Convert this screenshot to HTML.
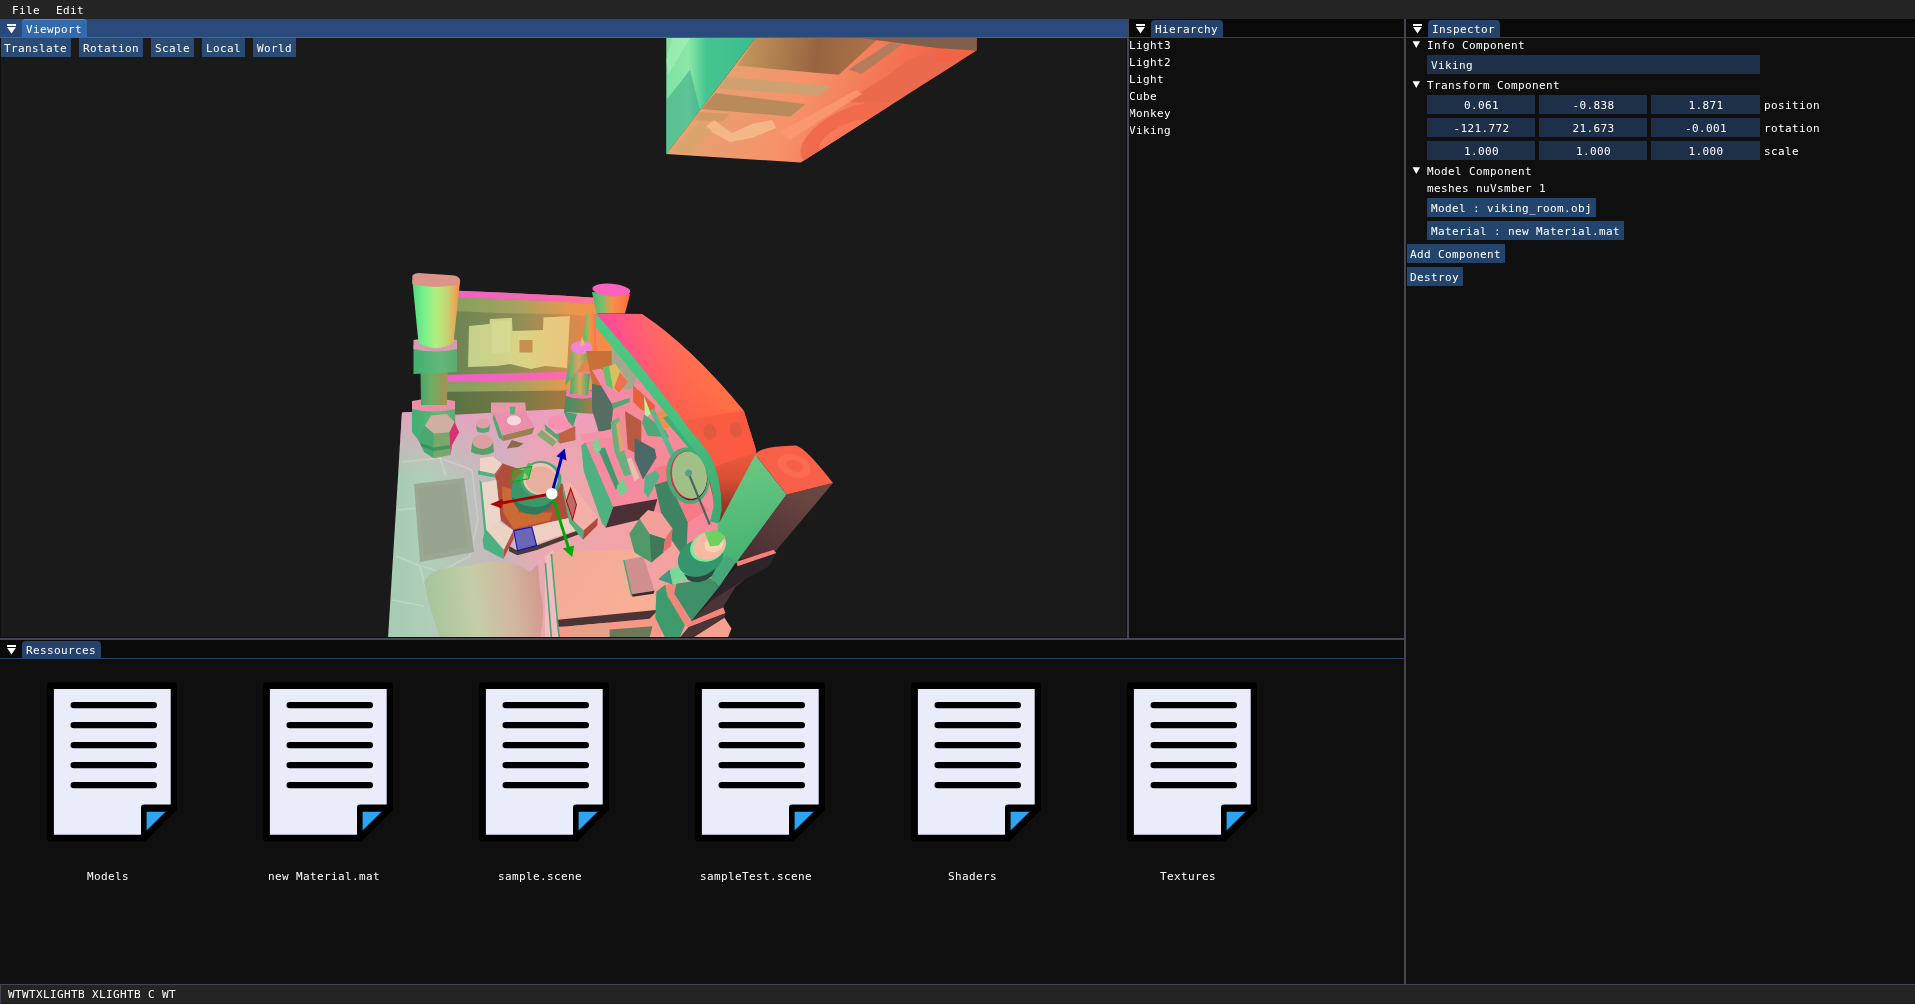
<!DOCTYPE html>
<html lang="en">
<head>
<meta charset="utf-8">
<title>Editor</title>
<style>
html,body{margin:0;padding:0;}
body{width:1915px;height:1004px;overflow:hidden;background:#0f0f0f;position:relative;
 font:11px/13px "DejaVu Sans Mono","Liberation Mono",monospace;letter-spacing:0.3774px;color:#fff;}
.a{position:absolute;}
.t{position:absolute;white-space:pre;height:13px;will-change:transform;}
.btn{position:absolute;height:19px;background:#23456d;}
.btn .t{left:4px;top:4px;}
.vbtn{background:#2a4c74;}
.frm{position:absolute;height:19px;background:#1d2f49;}
.frm .t{top:4px;}
.num{width:108px;}
.num .t{left:1px;right:0;text-align:center;}
.tri{position:absolute;width:0;height:0;border-left:3.7px solid transparent;border-right:3.7px solid transparent;border-top:6.8px solid #fff;}
.sep{position:absolute;background:#45454f;}
</style>
</head>
<body>

<!-- main menu bar -->
<div class="a" id="menubar" style="left:0;top:0;width:1915px;height:19px;background:#242424;">
  <span class="t" style="left:12px;top:4px;">File</span>
  <span class="t" style="left:56px;top:4px;">Edit</span>
</div>

<!-- ================= Viewport window ================= -->
<div class="a" id="viewport" style="left:0;top:19px;width:1127px;height:619px;background:#0f0f0f;overflow:hidden;">
  <div class="a" style="left:1px;top:19px;width:1125px;height:599px;background:#1a1a1a;"></div>
  <div class="a" style="left:0;top:0;width:1127px;height:18px;background:#294a7a;"></div>
  <div class="a" style="left:0;top:18px;width:1127px;height:1px;background:#3369ad;"></div>
  <div class="a" style="left:22px;top:0;width:65px;height:18px;background:#3369ad;border-radius:4px 4px 0 0;box-sizing:border-box;border-top:1px solid #4190f2;"></div>
  <svg class="a" style="left:0;top:0;" width="22" height="19"><rect x="7" y="5" width="9" height="2" fill="#fff"/><path d="M7.100 8.100h8.800l-4.400 6.500z" fill="#fff"/></svg>
  <span class="t" style="left:26px;top:4px;">Viewport</span>
  <svg class="a" style="left:0;top:19px;" width="1127" height="619" viewBox="0 38 1127 619" shape-rendering="geometricPrecision">
<defs>
  <clipPath id="vpclip"><rect x="1" y="38" width="1125" height="599"/></clipPath>
  <!-- top box -->
  <linearGradient id="tbG" x1="666" y1="0" x2="756" y2="0" gradientUnits="userSpaceOnUse">
    <stop offset="0" stop-color="#7fe2a2"/><stop offset="0.25" stop-color="#8ae8a8"/><stop offset="0.45" stop-color="#45c590"/><stop offset="1" stop-color="#3bbd8c"/>
  </linearGradient>
  <linearGradient id="tbO" x1="720" y1="60" x2="900" y2="140" gradientUnits="userSpaceOnUse">
    <stop offset="0" stop-color="#e6a272"/><stop offset="0.45" stop-color="#f6926a"/><stop offset="1" stop-color="#f26446"/>
  </linearGradient>
  <linearGradient id="tbB" x1="740" y1="40" x2="880" y2="60" gradientUnits="userSpaceOnUse">
    <stop offset="0" stop-color="#c8985e"/><stop offset="0.55" stop-color="#96653f"/><stop offset="1" stop-color="#b0744a"/>
  </linearGradient>
  <clipPath id="tbClip"><path d="M755.6 38 H976.5 V50.5 L800.7 162.5 L666.3 154.1 Z"/></clipPath>
  <!-- floor -->
  <linearGradient id="flG" x1="390" y1="0" x2="720" y2="0" gradientUnits="userSpaceOnUse">
    <stop offset="0" stop-color="#a6ccb2"/><stop offset="0.12" stop-color="#b0ceb8"/><stop offset="0.22" stop-color="#bcc2bb"/><stop offset="0.34" stop-color="#c8b6be"/><stop offset="0.46" stop-color="#eaa9b2"/><stop offset="1" stop-color="#f99e98"/>
  </linearGradient>
  <linearGradient id="flP" x1="0" y1="408" x2="0" y2="475" gradientUnits="userSpaceOnUse">
    <stop offset="0" stop-color="#ee9cc0" stop-opacity="0.9"/><stop offset="1" stop-color="#ee9cc0" stop-opacity="0"/>
  </linearGradient>
  <!-- wall -->
  <linearGradient id="wlG" x1="456" y1="0" x2="598" y2="0" gradientUnits="userSpaceOnUse">
    <stop offset="0" stop-color="#6d8552"/><stop offset="0.45" stop-color="#8f8f56"/><stop offset="0.8" stop-color="#d38a4e"/><stop offset="1" stop-color="#ec8646"/>
  </linearGradient>
  <linearGradient id="wlL" x1="456" y1="0" x2="598" y2="0" gradientUnits="userSpaceOnUse">
    <stop offset="0" stop-color="#86a05e"/><stop offset="0.45" stop-color="#a8a260"/><stop offset="0.8" stop-color="#e8984e"/><stop offset="1" stop-color="#f88e48"/>
  </linearGradient>
  <linearGradient id="wlP" x1="456" y1="0" x2="598" y2="0" gradientUnits="userSpaceOnUse">
    <stop offset="0" stop-color="#ee62c6"/><stop offset="0.6" stop-color="#fa66b4"/><stop offset="1" stop-color="#ff7a92"/>
  </linearGradient>
  <linearGradient id="mapG" x1="466" y1="0" x2="570" y2="0" gradientUnits="userSpaceOnUse">
    <stop offset="0" stop-color="#c3d08e"/><stop offset="0.5" stop-color="#d8d486"/><stop offset="1" stop-color="#ecc47a"/>
  </linearGradient>
  <!-- pillar -->
  <linearGradient id="p1G" x1="412" y1="0" x2="460" y2="0" gradientUnits="userSpaceOnUse">
    <stop offset="0" stop-color="#50d880"/><stop offset="0.25" stop-color="#78f08c"/><stop offset="0.5" stop-color="#b0f080"/><stop offset="0.75" stop-color="#c8d070"/><stop offset="0.93" stop-color="#f0a050"/><stop offset="1" stop-color="#e08a50"/>
  </linearGradient>
  <linearGradient id="p1D" x1="418" y1="0" x2="450" y2="0" gradientUnits="userSpaceOnUse">
    <stop offset="0" stop-color="#3fa468"/><stop offset="0.4" stop-color="#6cae62"/><stop offset="1" stop-color="#b08a50"/>
  </linearGradient>
  <linearGradient id="p1B" x1="412" y1="0" x2="458" y2="0" gradientUnits="userSpaceOnUse">
    <stop offset="0" stop-color="#3fae72"/><stop offset="0.6" stop-color="#62b878"/><stop offset="1" stop-color="#5ea870"/>
  </linearGradient>
  <!-- roof -->
  <linearGradient id="rfG" x1="610" y1="320" x2="740" y2="440" gradientUnits="userSpaceOnUse">
    <stop offset="0" stop-color="#ff4a9a"/><stop offset="0.3" stop-color="#ff5878"/><stop offset="0.6" stop-color="#ff6050"/><stop offset="1" stop-color="#ff5a3e"/>
  </linearGradient>
  <linearGradient id="rfO" x1="640" y1="365" x2="674" y2="337" gradientUnits="userSpaceOnUse"><stop offset="0" stop-color="#ff7c46" stop-opacity="0"/><stop offset="1" stop-color="#ff7c46" stop-opacity="0.6"/></linearGradient>
  <linearGradient id="arcG" x1="596" y1="314" x2="720" y2="520" gradientUnits="userSpaceOnUse"><stop offset="0" stop-color="#4ccc80"/><stop offset="0.6" stop-color="#46c07e"/><stop offset="1" stop-color="#3ea874"/></linearGradient>
  <linearGradient id="rfE" x1="690" y1="0" x2="760" y2="0" gradientUnits="userSpaceOnUse">
    <stop offset="0" stop-color="#f45e46"/><stop offset="1" stop-color="#ff583e"/>
  </linearGradient>
  <linearGradient id="rfW" x1="0" y1="450" x2="0" y2="540" gradientUnits="userSpaceOnUse">
    <stop offset="0" stop-color="#f05a3c"/><stop offset="0.33" stop-color="#d84e34"/><stop offset="0.67" stop-color="#8c3428"/><stop offset="0.9" stop-color="#5a2c28"/>
  </linearGradient>
  <!-- log -->
  <linearGradient id="lgG" x1="740" y1="470" x2="760" y2="560" gradientUnits="userSpaceOnUse">
    <stop offset="0" stop-color="#66c680"/><stop offset="1" stop-color="#46b272"/>
  </linearGradient>
  <linearGradient id="lgD" x1="800" y1="490" x2="760" y2="560" gradientUnits="userSpaceOnUse">
    <stop offset="0" stop-color="#6a4640"/><stop offset="1" stop-color="#4a3034"/>
  </linearGradient>
  <linearGradient id="bedG" x1="550" y1="560" x2="660" y2="640" gradientUnits="userSpaceOnUse">
    <stop offset="0" stop-color="#f0ac98"/><stop offset="1" stop-color="#fbb094"/>
  </linearGradient>
  <linearGradient id="furG" x1="425" y1="600" x2="545" y2="585" gradientUnits="userSpaceOnUse">
    <stop offset="0" stop-color="#a4c49c"/><stop offset="0.4" stop-color="#c4cea6"/><stop offset="0.7" stop-color="#d2b8a0"/><stop offset="1" stop-color="#d4948a"/>
  </linearGradient>
  <linearGradient id="tbase" x1="564" y1="0" x2="596" y2="0" gradientUnits="userSpaceOnUse"><stop offset="0" stop-color="#3f9060"/><stop offset="0.5" stop-color="#6a8a58"/><stop offset="1" stop-color="#c87040"/></linearGradient>
  <linearGradient id="p2G" x1="0" y1="0" x2="1" y2="0"><stop offset="0" stop-color="#4cb870"/><stop offset="0.28" stop-color="#7abf68"/><stop offset="0.5" stop-color="#f49448"/><stop offset="1" stop-color="#ff6a40"/></linearGradient>
  <linearGradient id="coneG" x1="0" y1="0" x2="1" y2="0">
    <stop offset="0" stop-color="#3db070"/><stop offset="0.5" stop-color="#d8a860"/><stop offset="1" stop-color="#3da868"/>
  </linearGradient>
</defs>
<g clip-path="url(#vpclip)">

<!-- ===== top box ===== -->
<path d="M666.3 38 H755.6 L666.3 154.1 Z" fill="url(#tbG)"/>
<path d="M666.3 100 L690 70 L700 110 L666.3 154.1 Z" fill="#3aa586" opacity="0.55"/>
<path d="M672 38 L690 38 L668 75 L666.3 60 Z" fill="#a8f0b4" opacity="0.6"/>
<g clip-path="url(#tbClip)">
  <rect x="660" y="30" width="330" height="140" fill="url(#tbO)"/>
  <path d="M756.6 37 H880 L838.7 74.7 L737 65.7 Z" fill="url(#tbB)"/>
  <path d="M854 37 H977 V50.7 L936.8 48 L890 42 Z" fill="#80604c"/>
  <path d="M726.5 77 L830.7 86 L819.3 96 L719 88.3 Z" fill="#cfa070"/>
  <path d="M715.2 93 L805.4 104.3 L790.4 116.5 L702 109 Z" fill="#b98a5a"/>
  <path d="M700 112 L730 114 L722 122 L694 120 Z" fill="#d49a66"/>
  <path d="M848.7 69.4 L890 42.7 L902 44.7 L861.4 74 Z" fill="#b47c5c"/>
  <ellipse cx="848" cy="134" rx="52" ry="24" transform="rotate(-27 848 134)" fill="#f26a4c"/>
  <ellipse cx="846" cy="137" rx="30" ry="12" transform="rotate(-27 846 137)" fill="#f87858"/>
  <path d="M845.4 101.4 L884.7 77.4 L908.7 60 L935.4 48.7 L936.1 62.7 L960.8 60.7 L943.4 72 L890 102.7 L863.4 102.7 Z" fill="#ea6a4e"/>
  <path d="M704 128 L714 120 L732 133 L752 124 L772 120 L776 128 L752 138 L730 142 Z" fill="#f4bc8c" opacity="0.85"/>
  <path d="M672 150 L700 122 L712 130 L690 155 Z" fill="#d8a46c" opacity="0.8"/>
  <path d="M780 132 L856 90 L862 94 L790 140 Z" fill="#fa9a74" opacity="0.8"/>
</g>

<!-- ===== floor ===== -->
<path d="M402 412.500 L460 409 L720 408 L730 560 L700 600 L684 638 L388 638 Z" fill="url(#flG)"/>
<path d="M402 412.500 L460 409 L720 408 L740 500 L396 500 Z" fill="url(#flP)"/>

<g fill="none" stroke="#ffffff" stroke-opacity="0.22" stroke-width="1.600">
<path d="M402 462 L440 458 L472 470"/><path d="M398 510 L416 508"/><path d="M396 556 L420 566 L426 590"/><path d="M440 458 L446 476"/><path d="M472 470 L478 520 L470 556 L440 572 L422 566"/><path d="M392 600 L424 606"/>
</g>
<!-- ===== back wall ===== -->
<path d="M440 290.500 L452 290.500 L500 292.500 L560 295.500 L598 298 L598 407 L440 415.500 Z" fill="url(#wlG)"/>
<path d="M440 391 L598 389 L598 407 L440 415.500 Z" fill="#1a2a10" opacity="0.2"/>
<path d="M452 296 L500 299 L560 301.500 L598 304.500 L598 317 L560 314 L500 313 L452 311 Z" fill="url(#wlL)"/>
<path d="M452 290.500 L500 292.500 L560 295.500 L598 298 L598 304.500 L560 301.500 L500 299 L452 296.500 Z" fill="url(#wlP)"/>
<path d="M440 380 L598 376 L598 390 L440 392 Z" fill="url(#wlL)"/>
<path d="M440 375 L598 371 L598 379 L440 382 Z" fill="url(#wlP)"/>
<!-- map -->
<path d="M469 326 L489.5 324 L490 319 L512 318 L512.5 331 L543 330 L543.5 317.5 L570 316 L567 368 L545 366 L531 369 L510 364 L497 366 L468 367 Z" fill="url(#mapG)"/>
<rect x="519.5" y="340" width="13" height="12.5" fill="#c8904c"/>
<path d="M492 321 L510 320.5 L510 352 L492 353 Z" fill="#d6dc96" opacity="0.7"/>

<!-- ===== pillar 2 + post ===== -->
<path d="M586 314 L596.500 314 L598 352 L582 352 Z" fill="url(#p2G)"/>
<path d="M591.900 292 L630.100 294 L625 313.500 L596.500 313.500 Z" fill="url(#p2G)"/>
<ellipse cx="611.300" cy="290" rx="19" ry="6.200" transform="rotate(5 611.300 290)" fill="#fa62be"/>

<!-- ===== left pillar ===== -->
<path d="M412 408 L455 406 L455.5 430 L440 447 L424 447 L412 432 Z" fill="url(#p1B)"/>
<path d="M412 401 Q433 396 455 401 L455 409 Q433 414 412 409 Z" fill="#e890a8"/>
<path d="M420.5 372 L447.5 372 L447 405 L421 405 Z" fill="url(#p1D)"/>
<path d="M413.5 345 L457 345 L457 372 L413.5 374 Z" fill="url(#p1B)"/>
<path d="M413.5 340 Q435 335 457 340 L457 349 Q435 354 413.5 349 Z" fill="#d89ab0"/>
<path d="M412.3 280 L460 282 L453.500 343 Q436 353 418.500 343 Z" fill="url(#p1G)"/>
<path d="M412.3 276 Q414 272.500 422 273.200 L452 275.300 Q460 276 460.300 281 L459.500 284 Q436 290 412.300 284 Z" fill="#dc9488"/>
<!-- hex barrel at pillar base -->
<path d="M417.7 438.7 L424.8 425.8 L433.8 433.6 L433.8 458.2 L424 452 Z" fill="#48a870"/>
<path d="M433.8 433.6 L449.4 432.3 L450.7 455 L433.8 458.2 Z" fill="#7aa868"/>
<path d="M449.4 432.3 L454.5 421.9 L459.1 432.3 L452 445.2 L450.7 455 Z" fill="#d83070"/>
<path d="M424.8 425.8 L431.2 415.4 L446.8 414.1 L454.5 421.9 L449.4 432.3 L433.8 433.6 Z" fill="#cfb0a0"/>
<path d="M420 443 L433.800 447.500 L450.300 445 L450.500 448.500 L433.800 451 L421.500 446.500 Z" fill="#3a8a60" opacity="0.8"/>

<!-- ===== torch 1 ===== -->
<path d="M566 392 L594 394 L596 414 L564 412 Z" fill="url(#tbase)"/>
<path d="M566 391 Q580 386 594 392 L594 397 Q580 401 566 396 Z" fill="#f07aa8"/>
<path d="M571 372 L590 374 L588 395 L570 394 Z" fill="url(#coneG)"/>
<path d="M571 350 L592.500 352 L565 386 Z" fill="url(#coneG)"/>
<ellipse cx="581.500" cy="347.500" rx="11" ry="6.500" fill="#f084d6"/>
<path d="M580 346 L582 336 L585 345 Z" fill="#ffb070"/>

<!-- ===== interior under the roof ===== -->
<path d="M596 318 L612 336 L690 440 L722 520 L700 560 L598 470 Z" fill="#f68a9a"/>
<path d="M596.500 322 L616 346 L616 353 L596.500 353 Z" fill="#f88a48"/>
<path d="M586 351 L616 351 L616 392 L594 392 Z" fill="#c87038"/>
<path d="M611.7 346 L626 349.7 L637 375 L633.2 389.2 L615.3 389.2 L611.7 366 Z" fill="#a6a88e"/>
<path d="M592 383.8 L615.3 389.2 L611 429 L599 432.500 L592 410 Z" fill="#566e62"/>
<path d="M592 370.3 L601 368.6 L629.7 398 L611.7 403.5 Z" fill="#f48aa8"/>
<path d="M611.7 403.5 L629.7 398 L629.7 402 L613 409 Z" fill="#50a878"/>
<path d="M602.8 367.7 L615.3 364 L628 382 L619 392.8 L606.3 385.6 Z" fill="#d8c060"/>
<path d="M602.8 367.7 L609 366 L613 389 L606.3 385.6 Z" fill="#60c070"/>
<path d="M620 372 L628 382 L619 392.8 L614 388 Z" fill="#f07050"/>
<path d="M633.2 385.6 L654.8 405.3 L654.8 416 L640.4 409 L633.2 401.7 Z" fill="#e8603c"/>
<path d="M644 396 L651 414 L645 418 Z" fill="#b8f0a0"/>
<path d="M644 414.3 L665.5 430.4 L669 437.6 L647.6 435.8 L642.2 423.2 Z" fill="#50a878"/>
<ellipse cx="663.5" cy="419.5" rx="8" ry="9.5" transform="rotate(-30 663.5 419.5)" fill="#f09050"/>
<path d="M649.7 410.2 L654 408.5 L675 454 L670.500 456.500 Z" fill="#58b890"/>
<path d="M625 411 L641.3 421 L641.3 455.9 L627.7 449.1 Z" fill="#b85a42"/>
<path d="M634.5 438.1 L654.8 449.1 L656.5 457.6 L643 479.6 L634.5 459.3 Z" fill="#4a6866"/>
<!-- bench -->
<path d="M581.2 445.7 L585.4 442.3 L613.3 506.7 L605.7 527.8 L601.5 521.9 L583.7 471.1 Z" fill="#4fb080"/>
<path d="M585.4 442.3 L610.8 437.3 L657.4 499.1 L613.3 506.7 Z" fill="#f68a9e"/>
<path d="M613.3 506.7 L657.4 499.1 L652.3 516.8 L605.7 527.8 Z" fill="#4a3034"/>
<path d="M598.1 449.1 L604.9 447.4 L619.3 484.7 L615.9 489.7 Z" fill="#3f9a70"/>
<path d="M580 434 L611 430 L612 437 L582 441.500 Z" fill="#f890a8"/>
<path d="M610.8 422 L619.3 416.9 L624.3 450.8 L631.1 474.5 L624.3 476.2 L614.2 450.8 Z" fill="#68b080"/>
<path d="M616 424 L620 421 L624.300 450 L620 452 Z" fill="#e8a070"/>
<path d="M626.9 459.3 L631.1 457.6 L639.6 477.9 L634.5 481.3 Z" fill="#e8c0b0"/>
<path d="M617 486 L623 478 L628 490 L620 496 Z" fill="#70d090"/>
<path d="M592 444 L598 436 L601 450 L595 454 Z" fill="#80d098"/>
<!-- window side -->
<path d="M654 468.6 L669.2 464.3 L681.9 501.6 L702.2 503.3 L709 510 L688.7 521.9 L668.4 481.3 L654.8 484.7 Z" fill="#f87a84"/>
<path d="M654.8 484.7 L668.4 480.4 L687.8 521.9 L686.1 560.9 L665 530.4 Z" fill="#3f8564"/>
<path d="M644.700 476 L656 470.500 L660 476 L648 498 L644 492 Z" fill="#58b088"/>

<!-- ===== table & stools ===== -->
<path d="M491 402.5 L525.2 402.5 L526 410.9 L493.5 414.2 L491 416.7 Z" fill="#e898a8"/>
<path d="M502.2 435.5 L534.4 427.2 L532 434 L503.500 441 Z" fill="#9a8056"/>
<path d="M506.800 448.500 L511.800 440 L523.500 443.500 L518.500 447 Z" fill="#8a6a4c"/>
<path d="M493.900 413.800 L497 421 L502.200 435.500 L503.500 441 L499 438 L492.500 418 Z" fill="#50a874"/>
<path d="M493.9 413.8 L524.8 410.5 L534.4 427.2 L502.2 435.5 Z" fill="#ea90aa"/>
<ellipse cx="513.9" cy="420.5" rx="7.100" ry="5" fill="#f8d8e0"/>
<path d="M509.400 406.700 L515.600 406.700 L514.500 414.200 L510.500 414.200 Z" fill="#58b078"/>
<path d="M475.900 424 L490.100 424 L489 431.500 Q483 434 477 431.500 Z" fill="#50a870"/>
<ellipse cx="483" cy="423.400" rx="7.100" ry="5" fill="#e0a0a8"/>
<path d="M472.200 442 L493 442 L494 452 Q483 458 471 452 Z" fill="#58a068"/>
<ellipse cx="482.600" cy="441.800" rx="10.400" ry="7.100" fill="#dca0a0"/>
<!-- log stump seat -->
<path d="M544.400 424 L556 434 L575 432 L575.300 440 L560 443.500 L546 432 Z" fill="#50a870"/>
<path d="M558.600 433.400 L575.300 426 L575.300 440 L560 443.500 Z" fill="#c06444"/>
<ellipse cx="560.300" cy="422.600" rx="12.500" ry="7.500" fill="#f890b0"/>
<path d="M536.9 435.1 L542.8 428.4 L557.8 440.1 L552.8 446.8 Z" fill="#88a870"/>
<path d="M542.8 428.4 L557.8 440.1 L556.600 441.700 L541.600 429.800 Z" fill="#f8a4a4"/>
<path d="M563.600 411.700 L577 414 L573 427 L568 421 Z" fill="#48a070"/>

<!-- ===== fire pit ===== -->
<path d="M494.2 472.4 L502 463.3 L562.8 484 L570.6 517.7 L547.3 522.8 L513.7 530.6 L500.7 520.3 L496.8 482.7 Z" fill="#b04c3c"/>
<path d="M502 486.6 L513.7 489.2 L518.8 512.5 L552.5 512.5 L549.9 520.3 L513.7 529.3 L503.3 512.5 Z" fill="#d07030" opacity="0.85"/>
<path d="M480 458.1 L492.9 456.6 L502.3 463.9 L494.9 473.9 L480 471.1 Z" fill="#eed2c8"/>
<path d="M478 470.600 L494.9 473.9 L494.2 477.5 L478 474.500 Z" fill="#50b080"/>
<path d="M494.900 473.900 L502.300 463.900 L502 468 L494.200 477.500 Z" fill="#b85a50"/>
<path d="M481.3 482.7 L496.2 480.1 L500.7 520.3 L486.5 533.2 L483.9 504.7 Z" fill="#ecd6c8"/>
<path d="M479.500 480 L481.6 482.7 L486.5 533.2 L484.500 536 Z" fill="#48b07c"/>
<path d="M485.8 529.3 L499.4 521.6 L513.4 530.6 L503.9 550 Z" fill="#ecd2c0"/>
<path d="M482.6 539.7 L485.800 529.300 L503.9 550 L503.3 559.1 L483.9 548.7 Z" fill="#4cb080"/>
<path d="M503.9 550 L513.4 530.6 L513.9 538.4 L503.3 559.1 Z" fill="#b85048"/>
<path d="M509.1 546.1 L517.5 550.7 L536.6 545.5 L579 530 L579.7 533.9 L537 550 L517.5 555.2 L509.1 551.3 Z" fill="#4a3a36"/>
<path d="M513.400 530.600 L531.8 527 L547.3 522.8 L570.6 517.7 L579 529.3 L536.6 543.6 L516 549 Z" fill="#eecfc2"/>
<path d="M562.8 484 L570.6 482.7 L597.8 517.7 L583.6 530.6 L570.6 517.7 Z" fill="#f4b0a8"/>
<path d="M562.8 484 L570.6 517.7 L583.6 530.6 L582.9 539.7 L569.3 522.8 L562.8 491.8 Z" fill="#50b080"/>
<path d="M583.6 530.6 L597.8 517.7 L597.2 525.4 L582.9 539.7 Z" fill="#b04838"/>
<ellipse cx="533" cy="491.800" rx="22" ry="22.600" fill="#3c966c"/>
<path d="M511.500 496 Q516 516 536 514.400 Q550 512 554.500 498 Q546 508 533 507 Q518 506 511.500 496 Z" fill="#2f7a5a"/>
<ellipse cx="541" cy="479.500" rx="20.500" ry="18.500" fill="#46a678"/>
<ellipse cx="540.500" cy="479" rx="17.500" ry="16" fill="#f0c4b4"/>
<ellipse cx="541" cy="480" rx="15" ry="13.500" fill="#e8ae9e"/>
<path d="M524 472 L528 463 L531 463.500 L529 478 Z" fill="#58b070"/>

<!-- ===== rugs ===== -->
<path d="M414 484 L464 478 L474 552 L420 562 Z" fill="#9ba793"/>
<path d="M418 488 L460 483 L468 546 L424 556 Z" fill="#97a38e"/>
<path d="M424 582 Q430 566 470 566 Q500 556 520 566 L530 572 L538 564 L540 590 Q546 610 540 638 L440 638 Q430 610 424 582 Z" fill="url(#furG)"/>

<!-- ===== right items (barrel, bed, book) ===== -->
<path d="M545 556 L553 550 L562 638 L545 638 Z" fill="#f2bcbc"/>
<path d="M557.9 619.7 L658.5 609.7 L662 638 L558 638 Z" fill="#f89888"/>
<path d="M551.4 552.9 L640.6 548.5 L658.5 609.7 L557.9 619.7 Z" fill="url(#bedG)"/>
<path d="M557.9 619.7 L658.5 609.7 L649.5 618.7 L568.8 626.2 L558.4 626.7 Z" fill="#4a3434"/>
<path d="M568.8 626.2 L607.7 622.7 L609.7 638 L569.8 638 Z" fill="#e8a088"/>
<path d="M609.7 629.6 L652.5 626.2 L649.5 638 L609.7 638 Z" fill="#6a7a58"/>
<path d="M551.4 554 L557.9 626.7 L559.500 638" stroke="#40a878" stroke-width="1.600" fill="none"/>
<path d="M545.4 562.9 L551.4 638" stroke="#40a878" stroke-width="1.600" fill="none"/>
<path d="M624.1 559.9 L643.5 556.4 L654.5 590.8 L631.6 594.3 Z" fill="#d09090"/>
<path d="M631.6 594.3 L654.5 590.8 L653.500 593.800 L632.600 596.800 Z" fill="#3a2a2a"/>
<path d="M623.100 559.900 L624.600 559.900 L632.100 594.300 L631.100 596.800 Z" fill="#40a878"/>
<!-- barrel -->
<path d="M629.4 533.8 L639.6 518.5 L649.7 533.8 L665 538.8 L663.3 552.4 L651.4 562.5 L634.5 552.4 Z" fill="#4f9a68"/>
<path d="M649.7 533.8 L665 538.8 L663.3 552.4 L651.4 562.5 Z" fill="#3f7a58"/>
<path d="M639.6 518.5 L648 510.1 L661.6 513.4 L672.6 528.7 L665 538.8 L649.7 533.8 Z" fill="#f4a098"/>
<path d="M665 538.8 L672.6 528.7 L671 546 L663.3 552.4 Z" fill="#e87070"/>

<!-- ===== roof ===== -->
<path d="M596 313.5 L642 314 Q691.4 347 743.5 410.5 L756 450 L700 470 L690 440 L640 370 L598 330 Z" fill="url(#rfG)"/>
<path d="M596 313.5 L642 314 Q691.4 347 743.5 410.5 L683.4 419.7 L640 362 Z" fill="url(#rfO)"/>
<!-- end face -->
<path d="M683 421 L744 411 L756 450 L764 520 L722 520 L705 470 Z" fill="url(#rfE)"/>
<path d="M706 470 L756 452 L766 540 L724 540 Z" fill="url(#rfW)"/>
<ellipse cx="710" cy="432" rx="6.500" ry="8" transform="rotate(-15 710 432)" fill="#e05a40"/>
<ellipse cx="736" cy="430" rx="6" ry="7.500" transform="rotate(-15 736 430)" fill="#e05a40"/>
<!-- round window -->
<ellipse cx="688" cy="475.800" rx="21.500" ry="28.500" transform="rotate(-10 688 475.800)" fill="#4fa878"/>
<ellipse cx="689" cy="476" rx="18" ry="24.500" transform="rotate(-10 689 476)" fill="#3a2a28"/>
<ellipse cx="688.500" cy="475.300" rx="17.800" ry="24" transform="rotate(-10 688.500 475.300)" fill="#e03050"/>
<ellipse cx="689.500" cy="475" rx="17.300" ry="23.700" transform="rotate(-10 689.500 475)" fill="#a0c088"/>
<path d="M688.800 473.800 L709.800 524.600" stroke="#46685a" stroke-width="2.200" fill="none"/>
<circle cx="688.500" cy="473" r="3.500" fill="#5aa088"/>
<!-- green arc trim -->
<path d="M662.800 417.800 L672 414 L690 440 L700 457 L692 452 Z" fill="#3fae78"/>
<path d="M596.6 314.3 L633.8 357.6 L678.7 414.6 L689.8 430 Q701 442 709.8 454.9 Q715.500 466 718.7 479.8 Q721.500 494 721.7 509.7 L719 523.6 L710 521.6 L713.7 505.7 Q713 492 709.8 479.8 Q706 467 699.8 456.9 L678.4 430 L666.7 414.6 L626.2 364.2 L594.9 325.8 Z" fill="url(#arcG)"/>

<!-- ===== big log ===== -->
<path d="M755.3 454.7 L786.6 494.5 L737.4 561.7 L711 578.5 L718 525 Z" fill="url(#lgG)"/>
<path d="M786.6 494.5 L833 483.1 L776.4 550.3 L738.1 560.1 Z" fill="url(#lgD)"/>
<path d="M755.3 454.700 Q760 446 796 445.500 Q806 448 833 483.100 L786.600 494.500 Z" fill="#f8604a"/>
<ellipse cx="794" cy="466" rx="17" ry="11" transform="rotate(20 794 466)" fill="#fa6c52"/>
<ellipse cx="795" cy="466" rx="9" ry="5.500" transform="rotate(20 795 466)" fill="#f4604a"/>
<!-- ledges & lower faces -->
<path d="M737.5 566.2 L776.4 553 L769.3 566.2 L745.2 579.3 L735.3 587 L723.3 606.7 L691.5 621 L718.9 584.8 Z" fill="#2c2428"/>
<path d="M745.2 579.3 L735.3 587 L723.3 606.7 L691.5 621 L712 600 Z" fill="#4a3436"/>
<path d="M736.4 561.8 L773.7 549.7 L776.4 553 L737.5 566.2 Z" fill="#f48078"/>
<path d="M726.6 555.2 L736.4 561.8 L718.9 587 L711.2 578.2 Z" fill="#46a87a"/>
<path d="M676.2 583.7 L711.2 578.2 L718.9 587 L691.5 621 L674 593.6 Z" fill="#3f9068"/>
<path d="M665.2 584.8 L676.2 583.7 L674 593.6 L690.4 621 L684.9 625.3 L667.4 595.8 Z" fill="#f08878"/>
<path d="M656.4 591.4 L665.2 584.8 L667.4 595.8 L684.9 625.3 L679.5 638 L665.2 638 L655.3 617.7 Z" fill="#3f9a6c"/>
<path d="M684.9 625.3 L691.5 621 L723.3 607.3 L725.5 613.3 L688.2 627.5 Z" fill="#f4847a"/>
<path d="M688.2 627.5 L725.5 613.3 L724.4 617.7 L692.6 638 L679.5 638 Z" fill="#4a3436"/>
<path d="M692.6 638 L724.4 617.7 L731.5 628.6 L727.7 638 Z" fill="#f8a090"/>
<!-- torch 2 -->
<path d="M658.1 579.3 L669.6 569.5 L672.9 584.8 Z" fill="#3f9a80"/>
<path d="M669.6 569.5 L688.2 561.8 L694.8 577.1 L672.9 584.8 Z" fill="#7ad898"/>
<ellipse cx="700.500" cy="557.500" rx="23.500" ry="18.500" transform="rotate(-25 700.500 557.500)" fill="#35956c"/>
<path d="M684 574 Q700 582 716 568 L712 576 Q700 586 688 580 Z" fill="#284a40"/>
<ellipse cx="708" cy="546.5" rx="18.500" ry="14.500" transform="rotate(-25 708 546.5)" fill="#7ee89c"/>
<ellipse cx="709.500" cy="545.5" rx="17" ry="13.500" transform="rotate(-25 709.500 545.5)" fill="#f8b8a4"/>
<ellipse cx="714" cy="544" rx="10" ry="8" transform="rotate(-25 714 544)" fill="#f8d4b0"/>
<path d="M704.7 532.2 L716.7 530 L725.5 536.6 L718.9 545.3 L710.1 546.4 Z" fill="#70d060"/>

<!-- ===== gizmo ===== -->
<path d="M512.4 469.8 L531.8 466.5 L528.5 478.8 L510.7 482.1 Z" fill="#30c030" fill-opacity="0.4" stroke="#12aa12" stroke-width="1.100"/>
<path d="M570.6 488.5 L576.4 504.7 L572.6 519.6 L566.5 500.8 Z" fill="#902020" fill-opacity="0.5" stroke="#b01010" stroke-width="1.100"/>
<path d="M513.7 530.6 L531.8 527 L536.6 545.5 L517.5 550.7 Z" fill="#5454b4" fill-opacity="0.85" stroke="#1010c0" stroke-width="1.100"/>
<path d="M551.800 493.700 L501 503.200" stroke="#aa0000" stroke-width="2.900" fill="none"/>
<path d="M490.1 504.3 L502.7 498.9 L501.4 508.3 Z" fill="#aa0000"/>
<path d="M551.800 493.700 L561.500 458" stroke="#0000aa" stroke-width="2.900" fill="none"/>
<path d="M564.8 448.4 L556.4 456.2 L566.5 460.5 Z" fill="#0000aa"/>
<path d="M551.800 493.700 L568.500 548" stroke="#00aa00" stroke-width="2.900" fill="none"/>
<path d="M572.2 557.1 L562.8 548.5 L574.1 545.5 Z" fill="#00aa00"/>
<circle cx="551.800" cy="493.700" r="5.800" fill="#ffffff"/>

</g>
</svg>

  <div class="btn vbtn" style="left:0;top:19px;width:71px;"><span class="t">Translate</span></div>
  <div class="btn vbtn" style="left:79px;top:19px;width:64px;"><span class="t">Rotation</span></div>
  <div class="btn vbtn" style="left:151px;top:19px;width:43px;"><span class="t">Scale</span></div>
  <div class="btn vbtn" style="left:202px;top:19px;width:43px;"><span class="t">Local</span></div>
  <div class="btn vbtn" style="left:253px;top:19px;width:43px;"><span class="t">World</span></div>
  <div class="a" style="left:0;top:19px;width:1px;height:600px;background:#0f0f0f;"></div>
</div>

<!-- ================= Hierarchy window ================= -->
<div class="a" id="hierarchy" style="left:1129px;top:19px;width:275px;height:619px;background:#0f0f0f;overflow:hidden;">
  <div class="a" style="left:0;top:0;width:275px;height:18px;background:#0a0a0a;"></div>
  <div class="a" style="left:0;top:18px;width:275px;height:1px;background:#24426b;"></div>
  <div class="a" style="left:22px;top:1px;width:72px;height:17px;background:#24426b;border-radius:4px 4px 0 0;"></div>
  <svg class="a" style="left:0;top:0;" width="22" height="19"><rect x="7" y="5" width="9" height="2" fill="#fff"/><path d="M7.100 8.100h8.800l-4.400 6.500z" fill="#fff"/></svg>
  <span class="t" style="left:26px;top:4px;">Hierarchy</span>
  <div class="a" style="left:1px;top:19px;width:274px;height:120px;overflow:hidden;">
    <span class="t" style="left:-1px;top:1px;">Light3</span>
    <span class="t" style="left:-1px;top:18px;">Light2</span>
    <span class="t" style="left:-1px;top:35px;">Light</span>
    <span class="t" style="left:-1px;top:52px;">Cube</span>
    <span class="t" style="left:-1px;top:69px;">Monkey</span>
    <span class="t" style="left:-1px;top:86px;">Viking</span>
  </div>
</div>

<!-- ================= Inspector window ================= -->
<div class="a" id="inspector" style="left:1406px;top:19px;width:509px;height:965px;background:#0f0f0f;overflow:hidden;">
  <div class="a" style="left:0;top:0;width:509px;height:18px;background:#0a0a0a;"></div>
  <div class="a" style="left:0;top:18px;width:509px;height:1px;background:#24426b;"></div>
  <div class="a" style="left:22px;top:1px;width:72px;height:17px;background:#24426b;border-radius:4px 4px 0 0;"></div>
  <svg class="a" style="left:0;top:0;" width="22" height="19"><rect x="7" y="5" width="9" height="2" fill="#fff"/><path d="M7.100 8.100h8.800l-4.400 6.500z" fill="#fff"/></svg>
  <span class="t" style="left:26px;top:4px;">Inspector</span>

  <svg class="a" style="left:0;top:19px;" width="20" height="160"><path d="M6.600 3.200h7.400l-3.700 6.800z M6.600 43.200h7.400l-3.700 6.800z M6.600 129.200h7.400l-3.700 6.800z" fill="#fff"/></svg>
  <span class="t" style="left:21px;top:20px;">Info Component</span>
  <div class="frm" style="left:21px;top:36px;width:333px;"><span class="t" style="left:4px;">Viking</span></div>

  <span class="t" style="left:21px;top:60px;">Transform Component</span>

  <div class="frm num" style="left:21px;top:76px;"><span class="t">0.061</span></div>
  <div class="frm num" style="left:133px;top:76px;"><span class="t">-0.838</span></div>
  <div class="frm num" style="left:245px;top:76px;width:109px;"><span class="t">1.871</span></div>
  <span class="t" style="left:358px;top:80px;">position</span>

  <div class="frm num" style="left:21px;top:99px;"><span class="t">-121.772</span></div>
  <div class="frm num" style="left:133px;top:99px;"><span class="t">21.673</span></div>
  <div class="frm num" style="left:245px;top:99px;width:109px;"><span class="t">-0.001</span></div>
  <span class="t" style="left:358px;top:103px;">rotation</span>

  <div class="frm num" style="left:21px;top:122px;"><span class="t">1.000</span></div>
  <div class="frm num" style="left:133px;top:122px;"><span class="t">1.000</span></div>
  <div class="frm num" style="left:245px;top:122px;width:109px;"><span class="t">1.000</span></div>
  <span class="t" style="left:358px;top:126px;">scale</span>

  <span class="t" style="left:21px;top:146px;">Model Component</span>
  <span class="t" style="left:21px;top:163px;">meshes nuVsmber 1</span>
  <div class="btn" style="left:21px;top:179px;width:169px;"><span class="t">Model : viking_room.obj</span></div>
  <div class="btn" style="left:21px;top:202px;width:197px;"><span class="t">Material : new Material.mat</span></div>
  <div class="btn" style="left:0;top:225px;width:99px;"><span class="t">Add Component</span></div>
  <div class="btn" style="left:0;top:248px;width:57px;"><span class="t">Destroy</span></div>
  <div class="a" style="left:0;top:19px;width:1px;height:300px;background:#0f0f0f;"></div>
</div>

<!-- ================= Ressources window ================= -->
<div class="a" id="ressources" style="left:0;top:640px;width:1404px;height:344px;background:#0f0f0f;overflow:hidden;">
  <div class="a" style="left:0;top:0;width:1404px;height:18px;background:#0a0a0a;"></div>
  <div class="a" style="left:0;top:18px;width:1404px;height:1px;background:#24426b;"></div>
  <div class="a" style="left:22px;top:1px;width:79px;height:17px;background:#24426b;border-radius:4px 4px 0 0;"></div>
  <svg class="a" style="left:0;top:0;" width="22" height="19"><rect x="7" y="5" width="9" height="2" fill="#fff"/><path d="M7.100 8.100h8.800l-4.400 6.500z" fill="#fff"/></svg>
  <span class="t" style="left:26px;top:4px;">Ressources</span>
  <svg class="a" style="left:0;top:0;" width="1404" height="344" viewBox="0 640 1404 344">
    <defs>
      <g id="doc">
        <path d="M3.2 0.3 H126.3 Q129.5 0.3 129.5 3.5 V128 L98 159.4 H3.2 Q0 159.4 0 156.2 V3.5 Q0 0.3 3.2 0.3 Z" fill="#000"/>
        <path d="M6.6 6.9 H123.4 V122.5 H97 Q93.7 122.5 93.7 125.8 V152.8 H6.6 Z" fill="#e9edf9"/>
        <path d="M99.3 129.8 H118.3 L99.3 148.5 Z" fill="#2ea3f2"/>
        <g stroke="#000" stroke-width="6.4" stroke-linecap="round">
          <path d="M26.4 23.1H106.5"/><path d="M26.4 43.1H106.5"/><path d="M26.4 63.1H106.5"/><path d="M26.4 83.1H106.5"/><path d="M26.4 103.1H106.5"/>
        </g>
      </g>
    </defs>
    <use href="#doc" x="47.3" y="682"/>
    <use href="#doc" x="263.3" y="682"/>
    <use href="#doc" x="479.3" y="682"/>
    <use href="#doc" x="695.3" y="682"/>
    <use href="#doc" x="911.3" y="682"/>
    <use href="#doc" x="1127.3" y="682"/>
  </svg>
  <span class="t" style="left:87px;top:230px;">Models</span>
  <span class="t" style="left:268px;top:230px;">new Material.mat</span>
  <span class="t" style="left:498px;top:230px;">sample.scene</span>
  <span class="t" style="left:700px;top:230px;">sampleTest.scene</span>
  <span class="t" style="left:948px;top:230px;">Shaders</span>
  <span class="t" style="left:1160px;top:230px;">Textures</span>
</div>

<!-- splitters -->
<div class="sep" style="left:1127px;top:19px;width:2px;height:619px;"></div>
<div class="sep" style="left:1404px;top:19px;width:2px;height:965px;"></div>
<div class="sep" style="left:0;top:638px;width:1404px;height:2px;"></div>

<!-- status bar -->
<div class="a" id="statusbar" style="left:0;top:984px;width:1915px;height:20px;background:#242424;box-sizing:border-box;border-top:1px solid #45454f;border-left:1px solid #45454f;border-bottom:1px solid #1a1a1a;">
  <span class="t" style="left:7px;top:3px;">WTWTXLIGHTB XLIGHTB C WT</span>
</div>

</body>
</html>
